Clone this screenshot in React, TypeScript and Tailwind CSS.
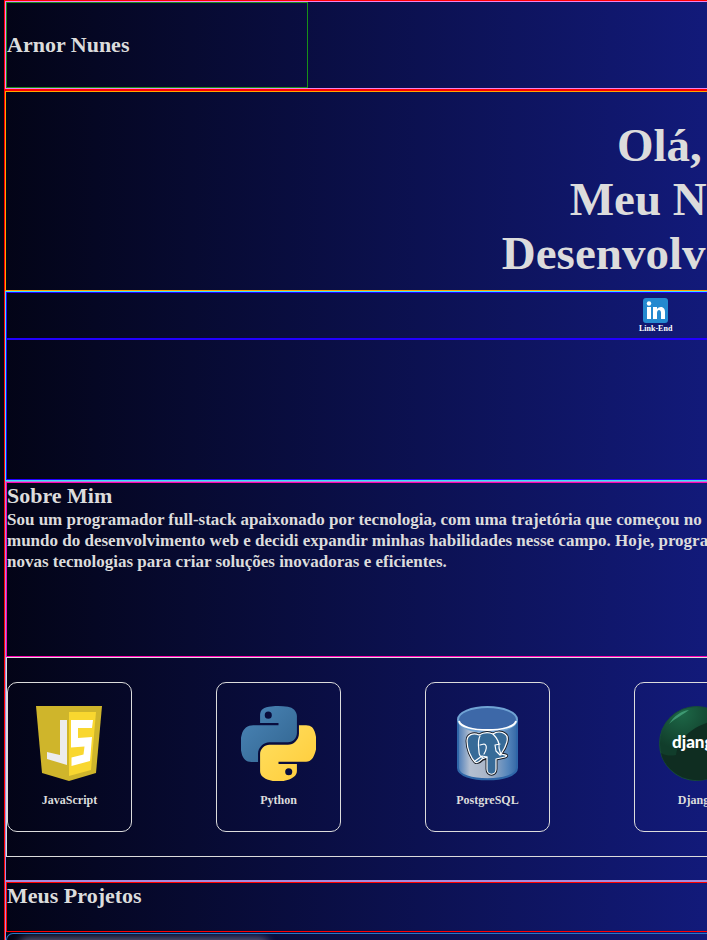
import type { ReactNode } from "react";

function JavaScriptLogo() {
  return (
    <svg viewBox="0 0 75 75" className="size-[75px]" aria-hidden="true">
      <path d="M4 0h66l-6 67-27 8-27-8z" fill="#cfb52b" />
      <path d="M37 6h27l-5 58-22 6z" fill="#f9d72f" />
      <path d="M28 14h7v45l-20-6v-7l13 3z" fill="#ececee" />
      <path d="M39 14h22l-1 8H46v10l14-1-2 24-18.500 5v-8.500l12-3 1-8-13.500 1z" fill="#fff" />
    </svg>
  );
}

function PythonLogo() {
  return (
    <svg viewBox="0 0 110 110" className="size-[75px]" aria-hidden="true">
      <defs>
        <linearGradient id="py-blue" x1="0" y1="0" x2="1" y2="1">
          <stop stopColor="#4b86b8" />
          <stop offset="1" stopColor="#31648f" />
        </linearGradient>
        <linearGradient id="py-gold" x1="0" y1="0" x2="1" y2="1">
          <stop stopColor="#ffe061" />
          <stop offset="1" stopColor="#ffcb38" />
        </linearGradient>
      </defs>
      <path
        fill="url(#py-blue)"
        d="M54 0c-5 0-9 .4-13 1.100C30 3 28 7.200 28 14.800V25h27v3.400H18c-8 0-14.800 4.700-17 13.700-2.500 10.300-2.600 16.800 0 27.500C2.900 77.600 7.500 82 15.400 82H25V70c0-9 7.700-16.800 16.800-16.800h27C76.200 53.200 82 47 82 39.600V14.800C82 7.500 76 2.300 68.800 1.100 64 .3 59 0 54 0zM40 8.200a5.200 5.200 0 1 1 0 10.400 5.200 5.200 0 0 1 0-10.400z"
      />
      <path
        fill="url(#py-gold)"
        d="M85 28.400v12C85 49.700 77.200 57 68.800 57h-27C34.500 57 28 63.300 28 70.700v24.800c0 7.200 6.100 11.200 13.100 13.200 8.500 2.500 16.400 2.900 27 0C75 106.700 82 102.700 82 95.500V85H55v-3.400h40.400c7.900 0 10.800-5.500 13.500-13.700 2.800-8.500 2.700-16.600 0-27.500-2-7.900-5.700-12-13.500-12zM70 91.200a5.200 5.200 0 1 1 0 10.400 5.200 5.200 0 0 1 0-10.400z"
      />
    </svg>
  );
}

function PostgresLogo() {
  return (
    <svg viewBox="0 0 75 75" className="size-[75px]" aria-hidden="true">
      <defs>
        <linearGradient id="pg-side">
          <stop stopColor="#4a7bb8" />
          <stop offset=".2" stopColor="#b4bfd0" />
          <stop offset=".5" stopColor="#a9b5c8" />
          <stop offset=".85" stopColor="#5485bb" />
          <stop offset="1" stopColor="#3568a6" />
        </linearGradient>
      </defs>
      <path d="M8 14v48c0 15 59 15 59 0V14z" fill="url(#pg-side)" stroke="#2f66a8" strokeWidth="2" />
      <ellipse cx="37.500" cy="13.500" rx="29.500" ry="12.500" fill="#3d68a8" stroke="#70a3d4" strokeWidth="2" />
      <path d="M9 15c2 12 55 12 57 0" fill="none" stroke="#fff" strokeWidth="1.800" />
      <g fill="#376b98" strokeLinejoin="round" strokeLinecap="round">
        <path
          d="M29 29c-6-3-12 0-12 6 0 8 4 17 8 21 3 2 6-1 8-3l4-1v11c0 7 9 7 9 0V53l9-2c4-2 0-2-4-3 5-7 9-17 4-20-4-3-9-2-12 0-4-2-9-2-14 1z"
          stroke="#161a22" strokeWidth="3"
        />
        <path
          d="M29 29c-6-3-12 0-12 6 0 8 4 17 8 21 3 2 5-1 7-3l5-2v12c0 7 9 7 9 0V53l9-2c4-2 0-2-4-3 5-7 9-17 4-20-4-3-9-2-12 0-4-2-9-2-14 1z"
          stroke="#fff" strokeWidth="1.200"
        />
        <path
          d="M30 30c-3 5-1 13-1 16 0 4 2 5 4 6m10-24c4 4 7 8 6 14l2 7M30 39l4-1c4 1 2 7 0 10m16-10-5 1 1 6 4 4M25 55l7-5 5 1"
          fill="none" stroke="#fff" strokeWidth="1.200"
        />
      </g>
    </svg>
  );
}

function DjangoLogo() {
  return (
    <svg viewBox="0 0 75 75" className="size-[75px]" aria-hidden="true">
      <defs>
        <radialGradient id="dj" cx=".3" cy=".08" r=".5">
          <stop stopColor="#1d6847" />
          <stop offset="1" stopColor="#113d2b" />
        </radialGradient>
      </defs>
      <circle cx="37.500" cy="37.500" r="37" fill="url(#dj)" stroke="#174c38" />
      <path d="M17 49C20 29 40 16 65 13c17 20 11 51-12 59C28 80 6 65 2 47c5 3 10 3 15 2z" fill="#0f2d21" />
      <path d="M10 18C15 10 22 5 30 4c-5 4-13 8-20 14z" fill="#55bd91" opacity=".6" />
      <text x="13" y="42" fill="#fff" fontFamily="Lato, sans-serif" fontSize="17" fontWeight="900">django</text>
    </svg>
  );
}

function LinkedInLogo() {
  return (
    <svg viewBox="0 0 25 25" className="size-[25px]" aria-hidden="true">
      <rect width="25" height="25" rx="3" fill="#2489d0" />
      <path d="M4 9h4v12H4zM10 9h4v2c2-3 8-3 8 3v7h-4v-6c0-4-4-4-4 0v6h-4z" fill="#fff" />
      <circle cx="6" cy="5.500" r="2.200" fill="#fff" />
    </svg>
  );
}

function SkillCard({ name, children }: { name: string; children: ReactNode }) {
  return (
    <li className="flex h-[150px] w-[125px] shrink-0 flex-col items-center justify-center gap-3 rounded-[10px] border border-[#dcdcdc] pb-0.5">
      {children}
      <span className="text-[12px] leading-[14px]">{name}</span>
    </li>
  );
}

export default function App() {
  return (
    <div className="overflow-hidden bg-linear-to-r/srgb from-[#030416] to-[#121a7a] pl-1 font-['Liberation_Serif',serif] font-bold text-[#dcdcdc]">
      <div className="w-[234vw] border-l border-[#ff0000]">
        <header className="border-y border-[#ff0000]">
          <div className="border border-[#ee82ee]">
            <div className="flex h-[86px] w-[302px] items-center border border-[#189018]">
              <h2 className="text-[22px] leading-[26px]">Arnor Nunes</h2>
            </div>
          </div>
        </header>

        <main>
          <section className="border-t border-[#ff0000]">
            <div className="flex h-[200px] items-center justify-center border border-[#ffa500] pt-4">
              <h1 className="text-center text-[47px] leading-[54px]">
                Olá, Seja Bem Vindo.
                <br />
                Meu Nome é Arnor Nunes
                <br />
                Desenvolvedor Full-Stack Júnior
              </h1>
            </div>
          </section>

          <section className="border border-[#40e0ff]">
            <nav className="flex h-[47px] items-center justify-center gap-[142px] border border-[#2200ff] pt-0.5">
              <a href="#linkedin" className="flex w-[34px] flex-col items-center text-[8px] leading-[12px] text-white">
                <LinkedInLogo />
                Link-End
              </a>
              <span className="w-[34px]" />
              <span className="w-[34px]" />
            </nav>
            <div className="h-[141px] border border-[#2200ff]" />
          </section>

          <section className="border border-[#a78bdc]">
            <div className="h-[175px] border border-[#ff00b4]">
              <h2 className="text-[22px] leading-[26px]">Sobre Mim</h2>
              <p className="text-[17px] leading-[21px]">
                Sou um programador full-stack apaixonado por tecnologia, com uma trajetória que começou no
                <br />
                mundo do desenvolvimento web e decidi expandir minhas habilidades nesse campo. Hoje, programo com
                <br />
                novas tecnologias para criar soluções inovadoras e eficientes.
              </p>
            </div>
            <ul className="flex h-[200px] items-center gap-[84px] border border-[#dcdcdc]">
              <SkillCard name="JavaScript"><JavaScriptLogo /></SkillCard>
              <SkillCard name="Python"><PythonLogo /></SkillCard>
              <SkillCard name="PostgreSQL"><PostgresLogo /></SkillCard>
              <SkillCard name="Django"><DjangoLogo /></SkillCard>
            </ul>
            <div className="h-[23px]" />
          </section>

          <section className="border-x border-t border-[#a78bdc]">
            <div className="h-[50px] border border-[#ff0000]">
              <h2 className="text-[22px] leading-[26px]">Meus Projetos</h2>
            </div>
            <div className="pt-px">
              <article className="h-[7px] overflow-hidden rounded-t-[10px] border-x border-t border-[#2878c8] pl-3">
                <div className="mt-1 h-4 w-[250px] rounded-lg bg-[#62627e] blur-xs" />
              </article>
            </div>
          </section>
        </main>
      </div>
    </div>
  );
}
